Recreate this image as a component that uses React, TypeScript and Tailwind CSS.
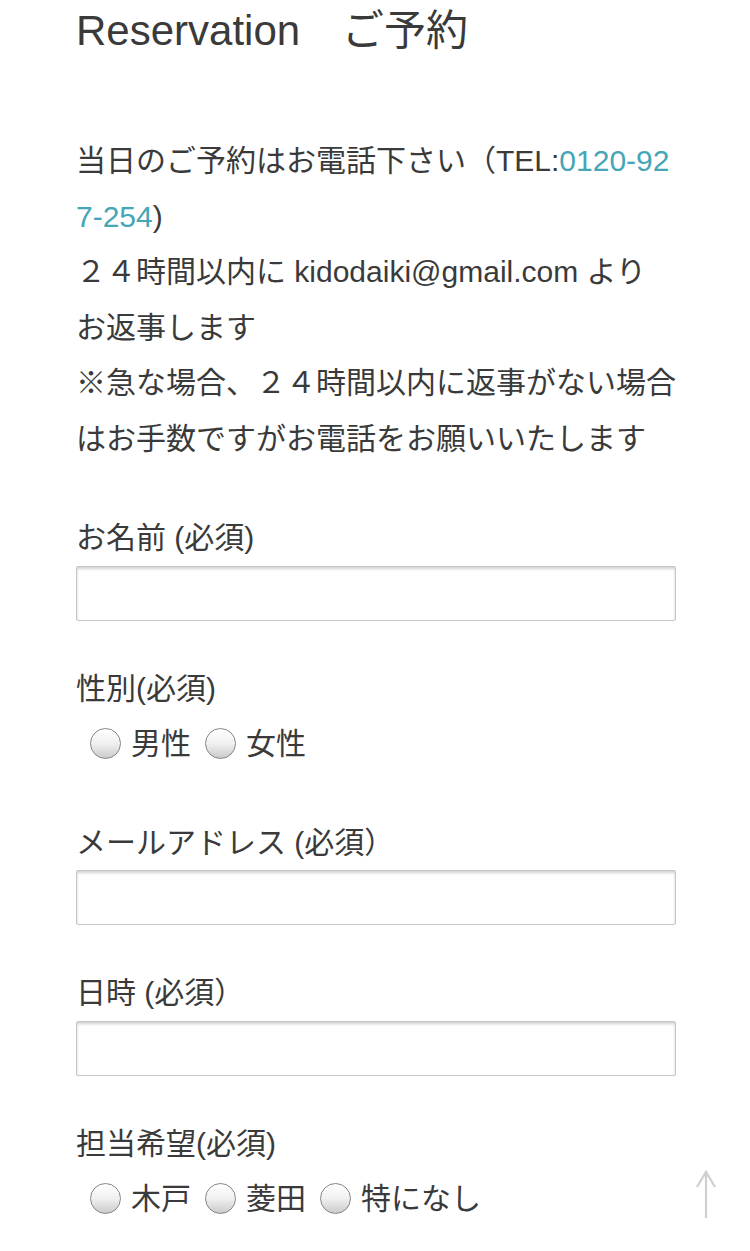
import React from "react";

const font = { fontFamily: '"Liberation Sans", "Noto Sans CJK JP", sans-serif' };

function Radio({ label }: { label: string }) {
  return (
    <span className="ml-[14px] flex items-center">
      <span className="block h-[31px] w-[31px] rounded-full border border-[#858585] bg-linear-to-b from-[#ffffff] via-[#f0f0f0] to-[#cbcbcb] shadow-[inset_0_1px_1px_rgba(255,255,255,0.9)]" />
      <span className="ml-[10px]">{label}</span>
    </span>
  );
}

function Field({ label }: { label: string }) {
  return (
    <div className="flex flex-col">
      <div className="leading-[55.5px] whitespace-nowrap">{label}</div>
      <div className="h-[55px] w-[600px] rounded-[2px] border border-[#c6c6c6] bg-white shadow-[inset_0_2px_3px_rgba(0,0,0,0.18)]" />
    </div>
  );
}

function RadioField({ label, options }: { label: string; options: string[] }) {
  return (
    <div className="flex flex-col pb-[3px]">
      <div className="leading-[55.5px] whitespace-nowrap">{label}</div>
      <div className="flex h-[55.5px] items-center leading-[55.5px]">
        {options.map((o) => (
          <Radio key={o} label={o} />
        ))}
      </div>
    </div>
  );
}

export default function App() {
  return (
    <div className="relative min-h-[1251px] w-[750px] bg-white text-[#3a3a3a]" style={font}>
      <div className="flex w-[676px] flex-col pl-[76px]">
        <h1 className="pt-[6px] text-[42px] leading-[50px] whitespace-nowrap font-normal">Reservation　ご予約</h1>
        <p className="mt-[77px] text-[30px] leading-[55.5px] whitespace-nowrap">
          当日のご予約はお電話下さい（TEL:<a className="text-[#45a6b6]">0120-92<br />7-254</a>)
          <br />
          ２４時間以内に kidodaiki@gmail.com より
          <br />
          お返事します
          <br />
          ※急な場合、２４時間以内に返事がない場合
          <br />
          はお手数ですがお電話をお願いいたします
        </p>
        <div className="mt-[44px] flex flex-col gap-[40px] text-[30px]">
          <Field label="お名前 (必須)" />
          <RadioField label="性別(必須)" options={["男性", "女性"]} />
          <Field label="メールアドレス (必須）" />
          <Field label="日時 (必須）" />
          <RadioField label="担当希望(必須)" options={["木戸", "菱田", "特になし"]} />
        </div>
      </div>
      <svg className="absolute left-[694px] top-[1168px]" width="24" height="52" viewBox="0 0 24 52" fill="none">
        <path d="M12 3 V50" stroke="#cfcfcf" strokeWidth="2.2" />
        <path d="M3 19 L12 4 L21 19" stroke="#cfcfcf" strokeWidth="2.2" strokeLinejoin="miter" />
      </svg>
    </div>
  );
}
